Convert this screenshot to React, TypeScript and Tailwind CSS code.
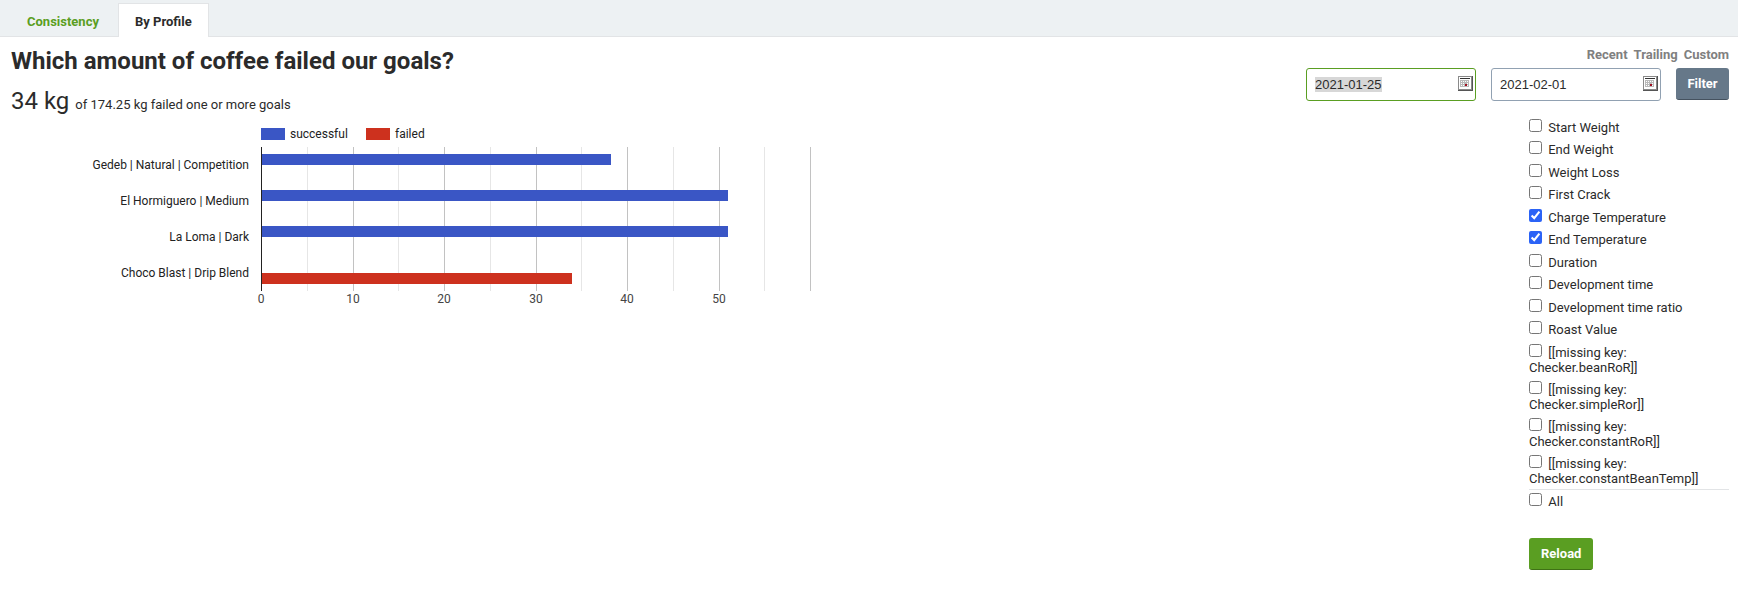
import { useEffect, useRef, useState } from 'react';
import type { Ref } from 'react';

const metrics = [
  'Start Weight',
  'End Weight',
  'Weight Loss',
  'First Crack',
  'Charge Temperature',
  'End Temperature',
  'Duration',
  'Development time',
  'Development time ratio',
  'Roast Value',
];

const checkers = [
  '[[missing key: Checker.beanRoR]]',
  '[[missing key: Checker.simpleRor]]',
  '[[missing key: Checker.constantRoR]]',
  '[[missing key: Checker.constantBeanTemp]]',
];

const profiles = [
  { name: 'Gedeb | Natural | Competition', successful: 38.25, failed: 0 },
  { name: 'El Hormiguero | Medium', successful: 51, failed: 0 },
  { name: 'La Loma | Dark', successful: 51, failed: 0 },
  { name: 'Choco Blast | Drip Blend', successful: 0, failed: 34 },
];

const AXIS_X = 250;
const AXIS_WIDTH = 549;
const AXIS_MAX = 60;
const PLOT_TOP = 26;
const ROW_HEIGHT = 36;

const scale = (value: number) => Math.round((value / AXIS_MAX) * AXIS_WIDTH);
// bars start right of the axis line
const barWidth = (value: number) => Math.max(scale(value) - 1, 0);

function ProfileChart() {
  const plotHeight = profiles.length * ROW_HEIGHT;
  const gridValues = [5, 10, 15, 20, 25, 30, 35, 40, 45, 50, 55, 60];

  return (
    <svg
      width="840"
      height="190"
      role="img"
      aria-label="Coffee per profile in kg"
      shapeRendering="crispEdges"
      className="block max-w-full text-[12px]"
    >
      <rect x={AXIS_X} y="7" width="24" height="12" fill="#3a56c5" />
      <text x={AXIS_X + 29} y="17" fill="#222222">successful</text>
      <rect x={AXIS_X + 105} y="7" width="24" height="12" fill="#cd311e" />
      <text x={AXIS_X + 134} y="17" fill="#222222">failed</text>

      {gridValues.map((value) => (
        <rect
          key={value}
          x={AXIS_X + scale(value)}
          y={PLOT_TOP}
          width="1"
          height={plotHeight}
          fill={value % 10 === 0 ? '#c2c2c2' : '#e6e6e6'}
        />
      ))}

      {profiles.map((profile, i) => {
        const top = PLOT_TOP + i * ROW_HEIGHT;
        return (
          <g key={profile.name}>
            <text x={AXIS_X - 12} y={top + 22} textAnchor="end" fill="#222222">{profile.name}</text>
            <rect x={AXIS_X + 1} y={top + 7} width={barWidth(profile.successful)} height="11" fill="#3a56c5" />
            <rect x={AXIS_X + 1} y={top + 18} width={barWidth(profile.failed)} height="11" fill="#cd311e" />
          </g>
        );
      })}

      <rect x={AXIS_X} y={PLOT_TOP} width="1" height={plotHeight} fill="#222222" />
      {[0, 10, 20, 30, 40, 50].map((value) => (
        <text key={value} x={AXIS_X + scale(value)} y="182" textAnchor="middle" fill="#444444">{value}</text>
      ))}
    </svg>
  );
}

function CalendarIcon() {
  return (
    <svg width="15" height="15" viewBox="0 0 15 15" shapeRendering="crispEdges" aria-hidden="true">
      <rect width="15" height="15" fill="#555555" />
      <rect width="14" height="14" fill="#8a8a8a" />
      <rect x="1" y="1" width="12" height="12" fill="#ffffff" />
      <rect x="2" y="2" width="10" height="1" fill="#333333" />
      <path d="M2 4h9v7H2z" fill="#b9b9b9" />
      <path d="M3 5h1v1H3zM5 5h1v1H5zM7 5h1v1H7zM9 5h1v1H9zM3 7h1v1H3zM5 7h1v1H5zM9 7h1v1H9zM3 9h1v1H3zM5 9h1v1H5zM9 9h1v1H9z" fill="#ffffff" />
      <rect x="7" y="8" width="2" height="2" fill="#a01020" />
    </svg>
  );
}

type DateFieldProps = {
  label: string;
  defaultValue: string;
  inputRef?: Ref<HTMLInputElement>;
};

function DateField({ label, defaultValue, inputRef }: DateFieldProps) {
  return (
    <div className="relative">
      <input
        ref={inputRef}
        type="text"
        aria-label={label}
        defaultValue={defaultValue}
        className="block w-[170px] h-[33px] pl-2 pr-7 rounded-[3px] border border-[#91a1b2] bg-white font-['Liberation_Sans',Arial,sans-serif] text-[13px] text-[#2b2b2b] outline-none focus:border-[#5a9e22] selection:bg-[#d7d7d7] selection:text-[#2b2b2b]"
      />
      <button type="button" aria-label={`Open calendar: ${label}`} className="absolute right-[3px] top-2">
        <CalendarIcon />
      </button>
    </div>
  );
}

type CheckProps = {
  label: string;
  checked: boolean;
  onChange: () => void;
};

function Check({ label, checked, onChange }: CheckProps) {
  return (
    <label className="block">
      <input
        type="checkbox"
        checked={checked}
        onChange={onChange}
        className="w-[13px] h-[13px] mr-[3px] align-baseline accent-[#2b63f6]"
      />{' '}
      {label}
    </label>
  );
}

export default function App() {
  const fromRef = useRef<HTMLInputElement>(null);
  const [selected, setSelected] = useState<string[]>(['Charge Temperature', 'End Temperature']);
  const all = [...metrics, ...checkers];

  useEffect(() => {
    fromRef.current?.focus();
    fromRef.current?.select();
  }, []);

  const toggle = (name: string) =>
    setSelected((prev) => (prev.includes(name) ? prev.filter((n) => n !== name) : [...prev, name]));
  const allSelected = selected.length === all.length;

  return (
    <div className="bg-white font-[Roboto,sans-serif] text-[13px] leading-[15px] text-[#2b2b2b]">
      <nav className="flex items-end h-[37px] pl-[11px] bg-[#edf1f3] border-b border-[#e2e4e6] font-bold">
        <a href="#consistency" className="px-4 pb-[6px] leading-[17px] text-[#5a9e22]">Consistency</a>
        <a href="#profile" className="-mb-px ml-[3px] px-4 pt-[9px] pb-[7px] leading-[17px] bg-white border border-b-0 border-[#e2e4e6]">By Profile</a>
      </nav>

      <main className="flex justify-between pl-[11px] pr-[9px]">
        <section className="pt-2">
          <h1 className="text-[24px] leading-[32px] font-bold">Which amount of coffee failed our goals?</h1>
          <p className="mt-2 leading-[32px]">
            <span className="text-[24px]">34 kg</span>
            <span className="ml-[6px]">of 174.25 kg failed one or more goals</span>
          </p>
          <ProfileChart />
        </section>

        <aside className="flex flex-col items-end pt-[10px]">
          <div className="flex gap-[6px] font-bold text-[#808080]">
            <a href="#recent">Recent</a>
            <a href="#trailing">Trailing</a>
            <a href="#custom">Custom</a>
          </div>
          <form className="mt-[6px] flex items-start gap-[15px]" onSubmit={(e) => e.preventDefault()}>
            <DateField label="From" defaultValue="2021-01-25" inputRef={fromRef} />
            <DateField label="To" defaultValue="2021-02-01" />
            <button type="submit" className="w-[53px] h-8 rounded-[3px] border-b border-[#45525f] bg-[#667889] font-bold text-white">Filter</button>
          </form>

          <div className="mt-[18px] w-[200px]">
            <ul>
              {metrics.map((name) => (
                <li key={name} className="pb-[6px] even:pb-[7px]">
                  <Check label={name} checked={selected.includes(name)} onChange={() => toggle(name)} />
                </li>
              ))}
            </ul>
            <ul className="flex flex-col gap-[6px] pb-[3px] border-b border-[#e2e4e6]">
              {checkers.map((name) => (
                <li key={name}>
                  <Check label={name} checked={selected.includes(name)} onChange={() => toggle(name)} />
                </li>
              ))}
            </ul>
            <div className="pt-[3px]">
              <Check label="All" checked={allSelected} onChange={() => setSelected(allSelected ? [] : all)} />
            </div>
            <button type="button" className="mt-[29px] h-8 px-3 rounded-[3px] border-b border-[#3f7215] bg-[#5a9e22] font-bold text-white">Reload</button>
          </div>
        </aside>
      </main>
    </div>
  );
}
